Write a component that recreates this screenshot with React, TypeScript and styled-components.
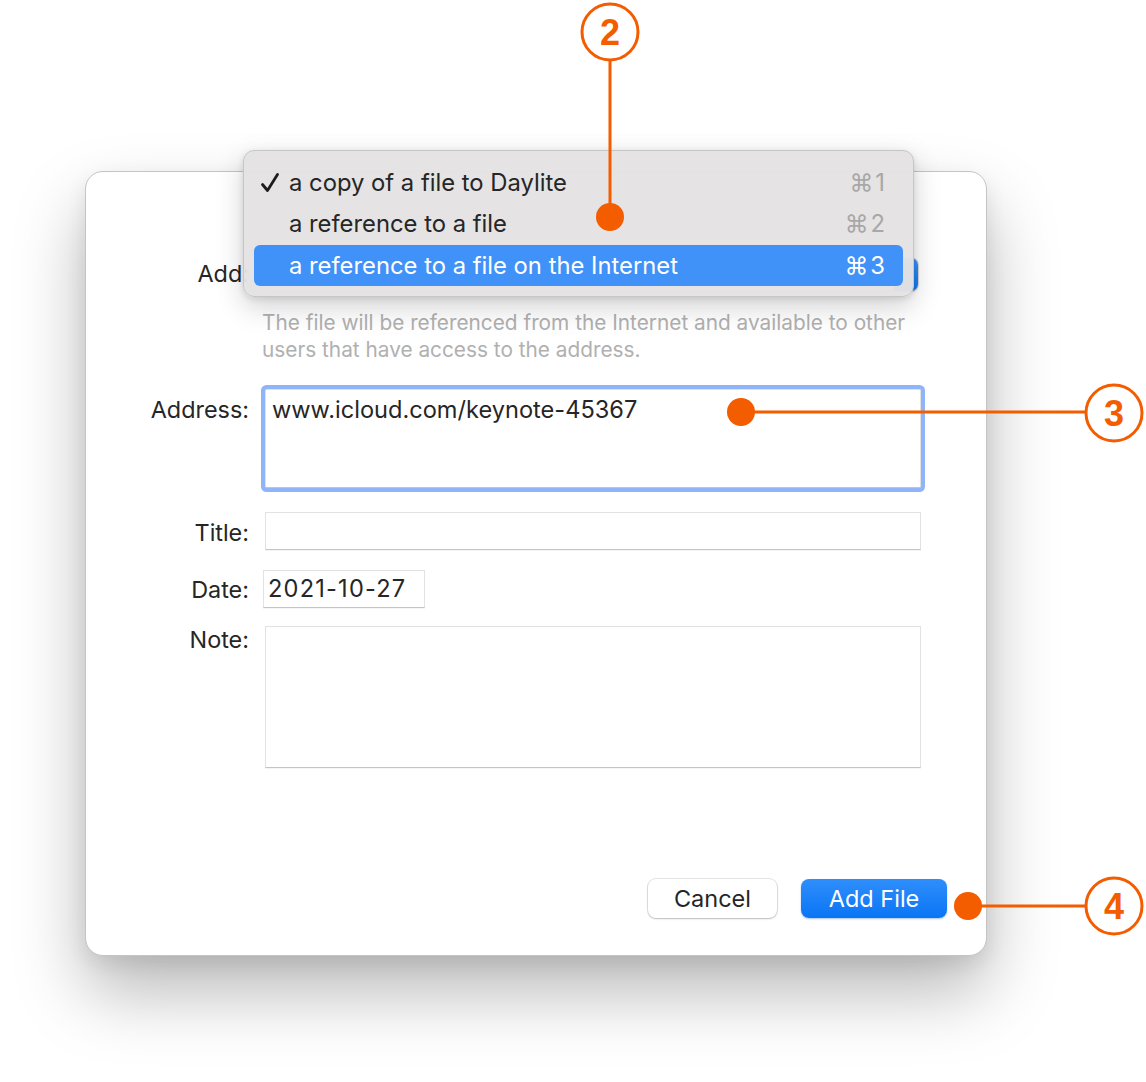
import React from "react";
import styled, { createGlobalStyle } from "styled-components";

const Global = createGlobalStyle`
  html, body { margin: 0; padding: 0; background: #ffffff; }
  body { font-family: Inter, "Liberation Sans", Arial, sans-serif; -webkit-font-smoothing: antialiased; }
  * { box-sizing: border-box; }
`;

const ORANGE = "#f45c00";

const Stage = styled.div`
  position: relative;
  width: 1146px;
  height: 1082px;
  padding: 171px 0 0 85px;
  overflow: hidden;
`;

const Dialog = styled.div`
  position: relative;
  width: 902px;
  height: 785px;
  background: #ffffff;
  border-radius: 18px;
  border: 1px solid #c4c4c4;
  box-shadow: 0 36px 70px rgba(0, 0, 0, 0.28), 0 8px 20px rgba(0, 0, 0, 0.08);
  display: flex;
  flex-direction: column;
  padding: 86px 65px 37px 0;
  color: #262626;
`;

const Form = styled.div`
  display: grid;
  grid-template-columns: 163px 1fr;
  column-gap: 16px;
  align-items: start;
`;

const Label = styled.div<{ $top: number; $mt?: number }>`
  font-size: 23.4px;
  line-height: 28px;
  text-align: right;
  padding-top: ${(p) => p.$top}px;
  margin-top: ${(p) => p.$mt ?? 0}px;
  color: #262626;
  white-space: nowrap;
`;

const Cell = styled.div<{ $mt?: number }>`
  margin-top: ${(p) => p.$mt ?? 0}px;
  display: flex;
`;

const PopupButton = styled.div`
  margin-left: -3px;
  width: 100%;
  height: 33px;
  border-radius: 7px;
  background: #ffffff;
  box-shadow: 0 0 0 1px rgba(0, 0, 0, 0.12), 0 1px 2px rgba(0, 0, 0, 0.15);
  display: flex;
  justify-content: flex-end;
`;

const PopupCap = styled.div`
  width: 24px;
  height: 100%;
  border-radius: 0 7px 7px 0;
  background: linear-gradient(#3b93fb, #0d77f5);
`;

const Help = styled.div`
  grid-column: 2;
  margin-top: 18px;
  margin-left: -3px;
  font-size: 20.8px;
  line-height: 27px;
  color: #b0b0b0;
  white-space: nowrap;
`;

const TextField = styled.div<{ $h: number; $w?: number; $focus?: boolean }>`
  width: ${(p) => (p.$w ? `${p.$w}px` : "100%")};
  height: ${(p) => p.$h}px;
  background: #ffffff;
  border: 1px solid #e2e2e2;
  border-bottom-color: #c4c4c4;
  box-shadow: ${(p) => (p.$focus ? "0 0 0 4px #8fb5f8" : "0 1px 0 rgba(0,0,0,0.04)")};
  border-radius: ${(p) => (p.$focus ? "2px" : "0")};
  font-size: 23.6px;
  line-height: 28px;
  padding: 6px 6px;
  color: #262626;
  white-space: nowrap;
`;

const DateField = styled(TextField)`
  margin-left: -2px;
  padding: 4px 4px;
  letter-spacing: 1.2px;
`;

const Footer = styled.div`
  margin-top: auto;
  margin-right: -26px;
  display: flex;
  justify-content: flex-end;
  gap: 24px;
`;

const Button = styled.div<{ $primary?: boolean }>`
  height: 39px;
  width: ${(p) => (p.$primary ? 146 : 129)}px;
  border-radius: 8px;
  display: flex;
  align-items: center;
  justify-content: center;
  font-size: 23.5px;
  color: ${(p) => (p.$primary ? "#ffffff" : "#262626")};
  background: ${(p) => (p.$primary ? "linear-gradient(#2f8efc, #0a75f5)" : "#ffffff")};
  box-shadow: ${(p) =>
    p.$primary
      ? "0 1px 2px rgba(0,90,220,0.35)"
      : "0 0 0 1px rgba(0,0,0,0.1), 0 1px 2px rgba(0,0,0,0.18)"};
`;

const Menu = styled.div`
  position: absolute;
  left: 157px;
  top: -22px;
  width: 671px;
  height: 147px;
  padding: 11px 10px 10px;
  border-radius: 11px;
  background: rgba(228, 226, 226, 0.97);
  border: 1px solid #c6c6c6;
  box-shadow: 0 10px 28px rgba(0, 0, 0, 0.18), 0 2px 6px rgba(0, 0, 0, 0.1);
  display: flex;
  flex-direction: column;
  z-index: 5;
`;

const MenuItem = styled.div<{ $active?: boolean }>`
  height: 42px;
  border-radius: 6px;
  display: grid;
  grid-template-columns: 29px 1fr auto;
  align-items: center;
  padding: 0 16px 0 6px;
  font-size: 23.8px;
  color: ${(p) => (p.$active ? "#ffffff" : "#262626")};
  background: ${(p) => (p.$active ? "#4091f8" : "transparent")};
`;

const CheckBox = styled.span`
  display: flex;
  align-items: center;
`;

const Shortcut = styled.span<{ $active?: boolean }>`
  color: ${(p) => (p.$active ? "#ffffff" : "#a8a8a8")};
  letter-spacing: 2px;
`;

const Overlay = styled.svg`
  position: absolute;
  left: 0;
  top: 0;
  pointer-events: none;
  z-index: 10;
`;

const CheckIcon = () => (
  <svg width="20" height="22" viewBox="0 0 20 22">
    <path
      d="M2.5 12.5 L7.5 18.5 L17.5 2.5"
      fill="none"
      stroke="#1d1d1d"
      strokeWidth={2.8}
      strokeLinecap="round"
      strokeLinejoin="round"
    />
  </svg>
);

const Callout: React.FC<{ cx: number; cy: number; n: string }> = ({ cx, cy, n }) => (
  <g>
    <circle cx={cx} cy={cy} r={28} fill="#ffffff" stroke={ORANGE} strokeWidth={3} />
    <text
      x={cx}
      y={cy + 13}
      textAnchor="middle"
      fontFamily="'Liberation Sans', Arial, sans-serif"
      fontWeight={700}
      fontSize={36}
      fill={ORANGE}
    >
      {n}
    </text>
  </g>
);

const items = [
  { label: "a copy of a file to Daylite", key: "⌘1", checked: true },
  { label: "a reference to a file", key: "⌘2" },
  { label: "a reference to a file on the Internet", key: "⌘3", active: true },
];

export default function App() {
  return (
    <>
      <Global />
      <Stage>
        <Dialog>
          <Menu>
            {items.map((it) => (
              <MenuItem key={it.key} $active={it.active}>
                <CheckBox>{it.checked ? <CheckIcon /> : null}</CheckBox>
                <span>{it.label}</span>
                <Shortcut $active={it.active}>{it.key}</Shortcut>
              </MenuItem>
            ))}
          </Menu>
          <Form>
            <Label $top={2}>Add:</Label>
            <Cell>
              <PopupButton>
                <PopupCap />
              </PopupButton>
            </Cell>
            <Help>
              The file will be referenced from the Internet and available to other
              <br />
              users that have access to the address.
            </Help>
            <Label $top={7} $mt={26}>Address:</Label>
            <Cell $mt={26}>
              <TextField $h={99} $focus>
                www.icloud.com/keynote-45367
              </TextField>
            </Cell>
            <Label $top={7} $mt={24}>Title:</Label>
            <Cell $mt={24}>
              <TextField $h={38} />
            </Cell>
            <Label $top={6} $mt={20}>Date:</Label>
            <Cell $mt={20}>
              <DateField $h={38} $w={162}>
                2021-10-27
              </DateField>
            </Cell>
            <Label $top={0} $mt={18}>Note:</Label>
            <Cell $mt={18}>
              <TextField $h={142} />
            </Cell>
          </Form>
          <Footer>
            <Button>Cancel</Button>
            <Button $primary>Add File</Button>
          </Footer>
        </Dialog>
        <Overlay width={1146} height={1082} viewBox="0 0 1146 1082">
          <line x1={610} y1={60} x2={610} y2={217} stroke={ORANGE} strokeWidth={3} />
          <circle cx={610} cy={217} r={14} fill={ORANGE} />
          <Callout cx={610} cy={32} n="2" />
          <line x1={741} y1={412} x2={1086} y2={412} stroke={ORANGE} strokeWidth={3} />
          <circle cx={741} cy={412} r={14} fill={ORANGE} />
          <Callout cx={1114} cy={413} n="3" />
          <line x1={968} y1={906} x2={1086} y2={906} stroke={ORANGE} strokeWidth={3} />
          <circle cx={968} cy={906} r={14} fill={ORANGE} />
          <Callout cx={1114} cy={906} n="4" />
        </Overlay>
      </Stage>
    </>
  );
}
